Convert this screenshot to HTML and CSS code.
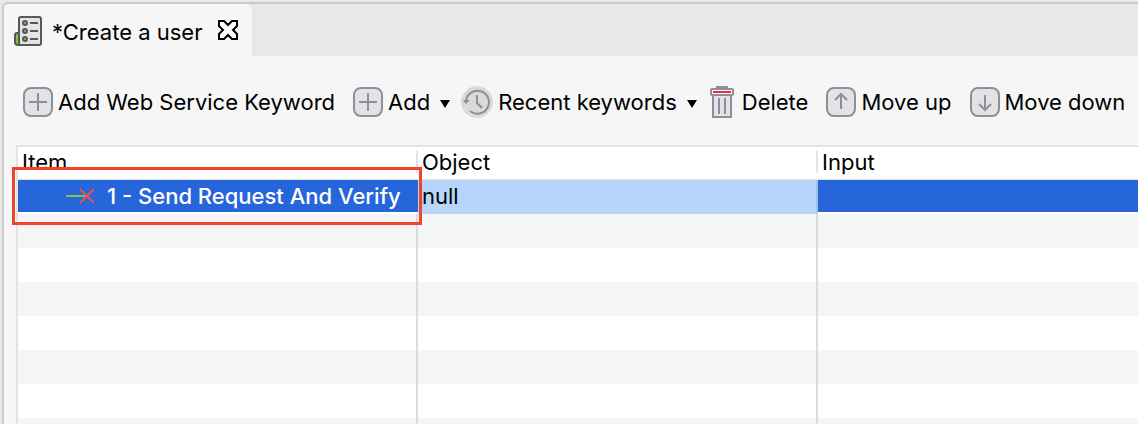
FILE: index.html
```html
<!DOCTYPE html>
<html lang="en">
<head>
<meta charset="utf-8">
<title>Create a user</title>
<link rel="stylesheet" href="styles.css">
</head>
<body>
<main class="editor">
  <div class="tabs">
    <div class="tab">
      <svg class="tab-icon" width="28" height="30" viewBox="0 0 28 30" fill="none" stroke="#58585a" stroke-width="2">
        <path d="M5 17H3Q1 17 1 19V26Q1 29 4 29H6Z" fill="#8bc34a"/>
        <path d="M5 29V3Q5 1 7 1H25Q27 1 27 3V27Q27 29 25 29Z" fill="#e4e4e4"/>
        <g fill="#8bc34a"><circle cx="11" cy="7" r="2"/><circle cx="11" cy="15" r="2"/><circle cx="11" cy="23" r="2"/></g>
        <path d="M16 7H24M16 15H24M16 23H24"/>
      </svg>
      <span class="tab-title">*Create a user</span>
      <button class="close" aria-label="Close tab">
        <svg width="20" height="20" viewBox="0 0 20 20" fill="#fff" stroke="#000" stroke-width="2"><path d="M1 1H6L10 5L14 1H19V6L15 10L19 14V19H14L10 15L6 19H1V14L5 10L1 6Z"/></svg>
      </button>
    </div>
  </div>
  <div class="toolbar">
    <button class="tool">
      <svg width="30" height="30" viewBox="0 0 30 30" fill="none" stroke="#8b919c" stroke-width="2"><rect x="1" y="1" width="28" height="28" rx="7" fill="#e3e2e4"/><path d="M15 6V24M6 15H24"/></svg>
      Add Web Service Keyword
    </button>
    <button class="tool menu">
      <svg width="30" height="30" viewBox="0 0 30 30" fill="none" stroke="#8b919c" stroke-width="2"><rect x="1" y="1" width="28" height="28" rx="7" fill="#e3e2e4"/><path d="M15 6V24M6 15H24"/></svg>
      Add
      <svg class="caret" width="10" height="8" viewBox="0 0 10 8"><path d="M0 0H10L5 8Z"/></svg>
    </button>
    <button class="tool menu">
      <svg width="32" height="32" viewBox="0 0 32 32" fill="none" stroke="#8b919c" stroke-width="2"><circle cx="16" cy="16" r="16" fill="#dadada" stroke="none"/><path d="M5 15A11.500 11.500 0 1 1 9 25M16 9V17L21 22"/><path d="M2 14H9L5 18Z" fill="#8b919c" stroke="none"/></svg>
      Recent keywords
      <svg class="caret" width="10" height="8" viewBox="0 0 10 8"><path d="M0 0H10L5 8Z"/></svg>
    </button>
    <button class="tool delete">
      <svg width="24" height="32" viewBox="0 0 24 32" fill="none" stroke="#8b919c" stroke-width="2"><path d="M7 2V1H17V2"/><path d="M3 9H21V31H3Z" fill="#e3e2e4"/><rect x="1" y="3" width="22" height="6" rx="1" fill="#fff"/><path d="M3 6H21" stroke="#ef2b2b"/><path d="M9 12V28M15 12V28"/></svg>
      Delete
    </button>
    <button class="tool">
      <svg width="30" height="30" viewBox="0 0 30 30" fill="none" stroke="#8b919c" stroke-width="2"><rect x="1" y="1" width="28" height="28" rx="7" fill="#e3e2e4"/><path d="M15 22V7M9 13L15 7L21 13"/></svg>
      Move up
    </button>
    <button class="tool">
      <svg width="30" height="30" viewBox="0 0 30 30" fill="none" stroke="#8b919c" stroke-width="2"><rect x="1" y="1" width="28" height="28" rx="7" fill="#e3e2e4"/><path d="M15 8V23M9 17L15 23L21 17"/></svg>
      Move down
    </button>
  </div>
  <table class="steps">
    <thead>
      <tr><th class="item">Item</th><th class="object"><span class="divided">Object</span></th><th><span class="divided">Input</span></th></tr>
    </thead>
    <tbody>
      <tr class="selected">
        <td class="current">
          <div class="step">
            <svg width="28" height="16" viewBox="0 0 28 16" fill="none" stroke-width="2"><path d="M0 8H20" stroke="#8bc34a"/><path d="M14 1L28 15M28 1L14 15" stroke="#e2574c"/></svg>
            1 - Send Request And Verify
          </div>
        </td>
        <td class="editing">null</td>
        <td></td>
      </tr>
      <tr><td></td><td></td><td></td></tr>
      <tr><td></td><td></td><td></td></tr>
      <tr><td></td><td></td><td></td></tr>
      <tr><td></td><td></td><td></td></tr>
      <tr><td></td><td></td><td></td></tr>
      <tr><td></td><td></td><td></td></tr>
      <tr><td></td><td></td><td></td></tr>
    </tbody>
  </table>
</main>
</body>
</html>
```
FILE: styles.css
```css
* { box-sizing: border-box; }
body {
  margin: 0;
  height: 100vh;
  padding: 2px 0 0 2px;
  overflow: hidden;
  background: #e9e9e9;
  color: #000;
  font: 22px/28px Inter, "Liberation Sans", sans-serif;
}
button {
  padding: 0;
  border: 0;
  background: none;
  color: inherit;
  font: inherit;
}
svg { display: block; flex: none; }
.editor {
  height: 100%;
  overflow: hidden;
  border: solid #cacaca;
  border-width: 2px 0 0 2px;
  border-top-left-radius: 6px;
  background: #f6f6f6;
}
.tabs { display: flex; background: #e8e8e8; border-top-left-radius: 4px; }
.tab {
  display: flex;
  align-items: center;
  height: 52px;
  padding: 2px 14px 0 10px;
  border-radius: 4px 6px 0 0;
  background: #f6f6f6;
}
.tab-title { margin: 0 16px 0 10px; padding-top: 2px; }
.close { margin-bottom: 2px; }
.toolbar {
  display: flex;
  align-items: center;
  gap: 18px;
  height: 89px;
  padding: 2px 0 0 19px;
}
.tool {
  display: flex;
  align-items: center;
  gap: 5px;
  white-space: nowrap;
}
.menu { margin-right: -5px; }
.caret { margin: 4px 0 0 5px; }
.delete { gap: 8px; }
.menu + .menu { margin-left: -2px; }
.steps {
  width: calc(100% - 12px);
  margin-left: 12px;
  table-layout: fixed;
  border-collapse: separate;
  border-spacing: 0;
  border: solid #e3e3e3;
  border-width: 2px 0 0 2px;
  background: #fff;
}
th {
  height: 33px;
  padding: 0 0 2px;
  border-bottom: 1px solid #e0e0e0;
  font-weight: 400;
  text-align: left;
}
.item, .object { width: 400px; }
.item { padding-left: 4px; }
.divided {
  display: block;
  height: 22px;
  margin-left: -2px;
  padding-left: 4px;
  border-left: 2px solid #e3e3e3;
  line-height: 22px;
}
td {
  height: 34px;
  padding: 0 0 0 4px;
  border-right: 2px solid #dcdcdc;
}
td:last-child { border-right: 0; }
tbody tr:nth-child(even) { background: #f4f5f5; }
.selected td {
  border-right: 0;
  border-bottom: 2px solid #fff;
  background: #2765db;
}
.selected .editing {
  border-right: 2px solid #a5c1e5;
  border-bottom-color: #b8d6fc;
  background: #b8d6fc;
}
.current { position: relative; }
.current::after {
  content: "";
  position: absolute;
  inset: -13px -4px -13px -6px;
  border: 3px solid #ee4429;
}
.step {
  display: flex;
  align-items: center;
  gap: 13px;
  padding-left: 44px;
  color: #fff;
  font-weight: 500;
  white-space: nowrap;
}
```
